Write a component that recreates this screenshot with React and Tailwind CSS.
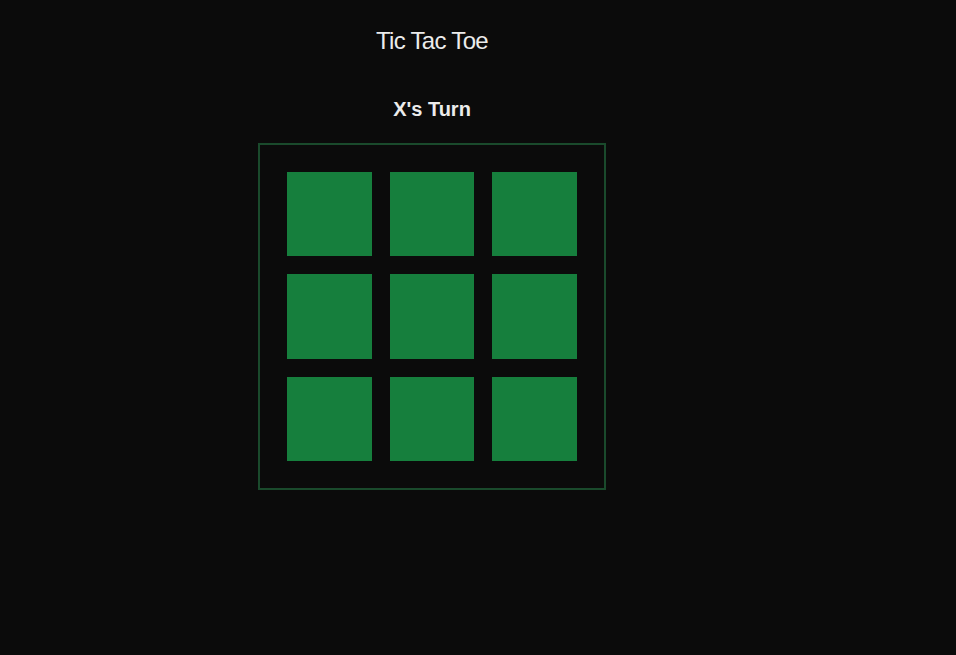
import React, { useState } from "react";

const App = () => {
  const [cells, setCells] = useState(Array(9).fill(null));
  const [xTurn, setXTurn] = useState(true);

  const handleClick = (i) => {
    if (cells[i]) return;
    const next = [...cells];
    next[i] = xTurn ? "X" : "O";
    setCells(next);
    setXTurn(!xTurn);
  };

  return (
    <div
      className="min-h-screen w-full bg-[#0b0b0b] text-[#ececec]"
      style={{ fontFamily: '"Liberation Sans", Arial, sans-serif' }}
    >
      <div className="w-[864px] flex flex-col items-center">
        <h1 className="mt-[27px] text-[24px] leading-[28px] font-normal tracking-[-0.7px]">
          Tic Tac Toe
        </h1>

        <h2 className="mt-[42px] text-[20px] leading-[24px] font-bold">
          {xTurn ? "X's Turn" : "O's Turn"}
        </h2>

        {/* board */}
        <div className="mt-[22px] w-[348px] h-[347px] border-2 border-[#1a4a2c] p-[27px] grid grid-cols-3 grid-rows-3 gap-[18px]">
          {cells.map((c, i) => (
            <button
              key={i}
              onClick={() => handleClick(i)}
              className="bg-[#167f3d] text-white text-4xl font-bold flex items-center justify-center cursor-pointer"
            >
              {c}
            </button>
          ))}
        </div>
      </div>
    </div>
  );
};

export default App;
